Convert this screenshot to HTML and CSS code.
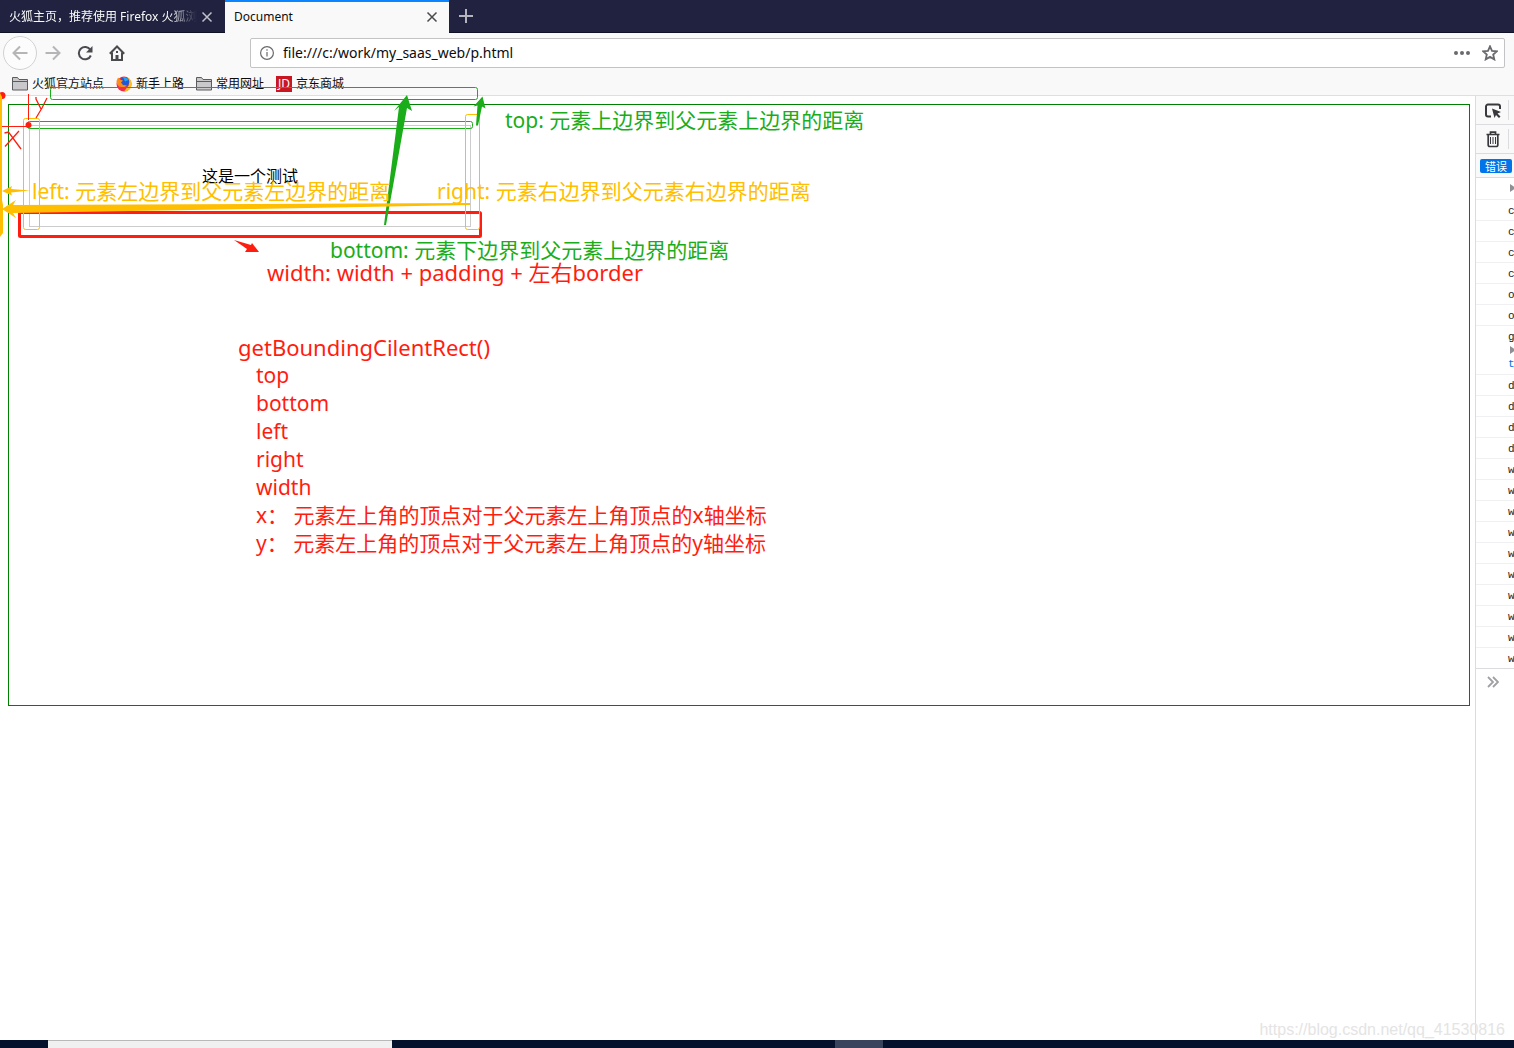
FILE: index.html
```
<!DOCTYPE html>
<html lang="zh-CN">
<head>
<meta charset="utf-8">
<title>Document</title>
<link rel="stylesheet" href="styles.css">
</head>
<body>
<header class="browser">
  <div class="tabs">
    <div class="tab">
      <span class="tab-title tab-title-fade">火狐主页，推荐使用 Firefox 火狐浏览器</span>
      <button class="icon-btn" aria-label="关闭标签页"><svg width="12" height="12" viewBox="0 0 12 12"><path d="M1.500 1.500l9 9M10.500 1.500l-9 9"/></svg></button>
    </div>
    <div class="tab tab-active">
      <span class="tab-title">Document</span>
      <button class="icon-btn" aria-label="关闭标签页"><svg width="12" height="12" viewBox="0 0 12 12"><path d="M1.500 1.500l9 9M10.500 1.500l-9 9"/></svg></button>
    </div>
    <button class="icon-btn new-tab" aria-label="新标签页"><svg width="14" height="14" viewBox="0 0 14 14"><path d="M7 0v14M0 7h14"/></svg></button>
  </div>
  <div class="nav">
    <button class="icon-btn nav-btn back" aria-label="后退"><svg width="16" height="16" viewBox="0 0 16 16"><path d="M15.500 8H1.500M8 1.500L1.500 8 8 14.500"/></svg></button>
    <button class="icon-btn nav-btn faded" aria-label="前进"><svg width="16" height="16" viewBox="0 0 16 16"><path d="M.5 8h14M8 1.500L14.500 8 8 14.500"/></svg></button>
    <button class="icon-btn nav-btn" aria-label="刷新"><svg width="16" height="16" viewBox="0 0 16 16"><path d="M13.300 4.800A6.200 6.200 0 1 0 13.800 10.500"/><path class="solid" d="M15.500 1v6.500H9z"/></svg></button>
    <button class="icon-btn nav-btn" aria-label="主页"><svg width="16" height="16" viewBox="0 0 16 16"><path d="M.8 8.700L8 1.500l7.200 7.200M3 7.500V15h10V7.500"/><path class="solid" d="M6.500 15v-5h3v5z"/><path d="M8 6v2"/></svg></button>
    <div class="urlbar">
      <svg class="info" width="14" height="14" viewBox="0 0 14 14"><circle cx="7" cy="7" r="6.400"/><path d="M7 6v4.500M7 3.300v1.500"/></svg>
      <input class="url" type="text" aria-label="地址" value="file:///c:/work/my_saas_web/p.html">
      <button class="icon-btn" aria-label="页面操作"><svg width="16" height="16" viewBox="0 0 16 16"><circle class="solid" cx="2" cy="8" r="2"/><circle class="solid" cx="8" cy="8" r="2"/><circle class="solid" cx="14" cy="8" r="2"/></svg></button>
      <button class="icon-btn" aria-label="加入书签"><svg width="16" height="16" viewBox="0 0 16 16"><path d="M8 1.300l2 4.500 4.900.5-3.700 3.200 1.100 4.900L8 11.900l-4.300 2.500 1.100-4.900L1.100 6.300 6 5.800z"/></svg></button>
    </div>
  </div>
  <nav class="bookmarks">
    <a class="bookmark" href="#"><svg class="folder" width="16" height="14" viewBox="0 0 16 14"><path d="M.5 13V.5h5l1.500 2h8.500V13zM.5 4.500h15"/></svg>火狐官方站点</a>
    <a class="bookmark" href="#"><svg width="16" height="16" viewBox="0 0 16 16"><circle cx="8" cy="8" r="7.500" fill="#f22d4b"/><path d="M8 15.500A7.500 7.500 0 0 0 14.500 4L12 1.500 9.500 4 13 9z" fill="#ffbd1f"/><circle cx="8.500" cy="6" r="4.800" fill="#2457d6"/><path d="M7 1a6 6 0 0 1 5.500 3L9 5.500z" fill="#20a5f5"/><path d="M.5 5L2 1.500l2 2 3 1-2 2 2 2.500 4 .5-3 2-5-1L1 8z" fill="#ff8a16"/></svg>新手上路</a>
    <a class="bookmark" href="#"><svg class="folder" width="16" height="14" viewBox="0 0 16 14"><path d="M.5 13V.5h5l1.500 2h8.500V13zM.5 4.500h15"/></svg>常用网址</a>
    <a class="bookmark" href="#"><span class="jd">JD</span>京东商城</a>
  </nav>
</header>

<div class="content">
  <main class="page">
    <section class="parent"><div class="child">这是一个测试</div></section>
  </main>
  <aside class="devtools">
    <div class="tool"><button class="icon-btn" aria-label="选取元素"><svg width="17" height="17" viewBox="0 0 17 17"><path d="M6 14.500H3A2 2 0 0 1 1 12.500V4.500a2 2 0 0 1 2-2h10a2 2 0 0 1 2 2V7"/><path class="solid" d="M7 6.500l9 3.500-3.500 1.500 3 3-1.500 1.500-3-3L9.500 16z"/></svg></button></div>
    <div class="tool"><button class="icon-btn" aria-label="清空"><svg width="14" height="17" viewBox="0 0 14 17"><path class="bin" d="M.5 3.500h13M4.500 3V1.200h5V3M2.200 4v10a1.500 1.500 0 0 0 1.500 1.500h6.600a1.500 1.500 0 0 0 1.500-1.500V4"/><path class="thin" d="M4.500 6v7M7 6v7M9.500 6v7"/></svg></button></div>
    <div class="filter"><button class="filter-btn">错误</button></div>
    <ul class="log">
      <li><i class="twisty"></i></li>
      <li>c</li><li>c</li><li>c</li><li>c</li><li>o</li><li>o</li>
      <li class="group">g<i class="twisty"></i><span class="token">t</span></li>
      <li>d</li><li>d</li><li>d</li><li>d</li>
      <li>w</li><li>w</li><li>w</li><li>w</li><li>w</li><li>w</li><li>w</li><li>w</li><li>w</li><li>w</li>
    </ul>
    <div class="prompt"><svg width="12" height="12" viewBox="0 0 12 12"><path d="M1 1l5 5-5 5M6 1l5 5-5 5"/></svg></div>
  </aside>
</div>

<footer class="taskbar"><span class="task-search"></span><span class="task-active"></span></footer>

<svg class="ink" width="520" height="270" viewBox="0 0 520 270">
  <g class="ink-green-line"><rect x="50.500" y="87.500" width="427" height="12" rx="2"/><rect x="27.500" y="121.500" width="445" height="7" rx="2"/></g>
  <rect class="ink-red-box" x="19.500" y="212.500" width="461" height="24" rx="1"/>
  <g class="ink-yellow-line"><rect x="23.500" y="118.500" width="16" height="111" rx="2"/><rect x="465.500" y="114.500" width="14" height="115" rx="2"/></g>
  <path class="green-fill" d="M407 95l5 16-5-3-21 117h-2l15-118-5 4zM482.500 96.500l3 12-3.500-2-4 19h-2l1.500-20-4 1z"/>
  <path class="red-line" d="M2 126.500h26M28.500 94v26"/>
  <path class="red-line pen" d="M36 97v2l5 10M47 98l-5 10-6 10M4.500 133l4-1L21 149M19 131L5 146.500"/>
  <circle class="red-fill" cx="28.500" cy="125" r="3"/><circle class="red-fill" cx="2" cy="95.500" r="3.500"/>
  <path class="red-fill" d="M234 240l17 5 1-2 7 9-14 0 2-3z"/>
  <path class="yellow-fill" d="M0 93l2 4v103l1 5v28l-3 4zM2 191l10-5-1 3 19 1.500-19 2 1 3zM2 209l14-9-3 5 457-2v2l-220 4-237 4 3 5z"/>
</svg>
<p class="note green note-top">top: 元素上边界到父元素上边界的距离</p>
<p class="note yellow note-left">left: 元素左边界到父元素左边界的距离</p>
<p class="note yellow note-right">right: 元素右边界到父元素右边界的距离</p>
<p class="note green note-bottom">bottom: 元素下边界到父元素上边界的距离</p>
<p class="note red note-width">width: width + padding + 左右border</p>
<div class="note red note-api">
  <div class="api-name">getBoundingCilentRect()</div>
  <ul class="api-list"><li>top</li><li>bottom</li><li>left</li><li>right</li><li>width</li><li>x： 元素左上角的顶点对于父元素左上角顶点的x轴坐标</li><li>y： 元素左上角的顶点对于父元素左上角顶点的y轴坐标</li></ul>
</div>
<p class="watermark">https://blog.csdn.net/qq_41530816</p>
</body>
</html>
```
FILE: styles.css
```
* { box-sizing: border-box; }
body {
  margin: 0;
  min-height: 100vh;
  display: flex;
  flex-direction: column;
  position: relative;
  overflow-x: hidden;
  background: #fff;
  color: #000;
  font: 12px/16px "Noto Sans", "Noto Sans CJK SC", sans-serif;
}
ul, p { margin: 0; padding: 0; list-style: none; }
svg { display: block; flex: none; fill: none; stroke: currentColor; stroke-width: 2; }
.solid { fill: currentColor; stroke: none; }
.icon-btn {
  display: flex; align-items: center; justify-content: center;
  padding: 0; border: 0; background: none; color: inherit;
}

.browser { background: #f9f9fa; border-bottom: 1px solid #dfdfe1; }
.tabs { display: flex; height: 33px; background: #20223f; border-bottom: 1px solid #0f1126; color: #f9f9fa; }
.tab { display: flex; align-items: center; justify-content: space-between; width: 225px; height: 33px; padding: 0 12px 0 9px; }
.tab svg { stroke-width: 1.500; color: #c0c0c8; }
.tab-active { width: 224px; background: #f9f9fa; border-top: 2px solid #0a84ff; color: #0c0c0d; padding: 0 11px 2px 9px; }
.tab-active svg { color: #4a4a4f; }
.tab-title { white-space: nowrap; overflow: hidden; width: 188px; }
.tab-title-fade { mask-image: linear-gradient(to right, #000 160px, transparent 188px); }
.new-tab { width: 34px; color: #b4b4c0; }

.nav { display: flex; align-items: center; height: 40px; padding: 0 9px 0 3px; color: #4a4a4f; }
.nav-btn { width: 32px; height: 32px; }
.nav-btn svg { stroke-width: 2; }
.back { width: 34px; height: 34px; border: 1px solid #d2d2d4; border-radius: 50%; background: #fcfcfc; color: #b5b5b8; }
.faded { color: #b5b5b8; }
.urlbar {
  flex: 1; display: flex; align-items: center; gap: 12px;
  height: 30px; margin-left: 117px; padding: 0 6px 0 9px;
  background: #fff; border: 1px solid #c3c3c5; border-radius: 2px; color: #6a6a6e;
}
.url {
  flex: 1; min-width: 0; padding: 0; margin-left: -3px; border: 0; outline: 0; background: none; color: #0c0c0d;
  font: 14px/20px "Noto Sans", sans-serif;
}
.urlbar svg { stroke-width: 1.800; }
.urlbar .info { stroke-width: 1.200; }
.bookmarks { display: flex; align-items: center; gap: 12px; height: 22px; padding-left: 12px; }
.bookmark { display: flex; align-items: center; gap: 4px; color: #0c0c0d; text-decoration: none; white-space: nowrap; }
.bookmark svg { stroke: none; }
.bookmark .folder { fill: #c9c9cb; stroke: #5c5c60; stroke-width: 1; }
.jd { width: 16px; height: 16px; background: #c81623; color: #fff; font-size: 12px; line-height: 15px; text-align: center; }

.content { flex: 1; display: flex; }
.page { flex: 1; min-width: 0; padding: 8px 5px 8px 8px; }
.parent { height: 602px; padding: 20px; border: 1px solid #008000; }
.child {
  display: flex; align-items: center; justify-content: center;
  width: 442px; height: 102px; border: 1px solid #ccc; font-size: 16px;
}
.devtools { width: 39px; border-left: 1px solid #dcdce0; overflow: hidden; }
.tool { height: 29px; padding: 4px; background: #f9f9fa; border-bottom: 1px solid #dcdce0; color: #38383d; }
.tool .icon-btn { width: 29px; height: 20px; padding-right: 4px; padding-left: 2px; border-right: 1px solid #dcdce0; }
.tool .bin { stroke-width: 1.700; }
.tool .thin { stroke-width: 1; }
.filter { height: 24px; padding: 5px 0 0 4px; background: #f9f9fa; border-bottom: 1px solid #dcdce0; }
.filter-btn { width: 32px; height: 14px; padding: 0; border: 0; border-radius: 2px; background: #0074e8; color: #fff; font: 11px/14px "Noto Sans CJK SC", sans-serif; }
.log { color: #222; font: 11px/14px "Liberation Mono", monospace; border-bottom: 1px solid #dcdce0; }
.log li { height: 21px; padding: 4px 0 0 32px; border-bottom: 1px solid #f0f0f2; }
.log li:first-child { height: 22px; }
.log li:last-child { height: 20px; border: 0; }
.log .group { height: 49px; }
.twisty { display: block; width: 0; height: 8px; margin: 2px 0 0 2px; border: 4px solid transparent; border-left: 6px solid #909094; border-right: 0; }
.token { display: block; margin-top: 3px; color: #0074e8; }
.prompt { padding: 7px 0 0 11px; color: #a0a0a4; }
.prompt svg { stroke-width: 1.800; }
.taskbar { display: flex; height: 8px; background: #04102c; }
.task-search { width: 344px; margin-left: 48px; background: #f0f0f0; border-top: 1px solid #b8b8b8; }
.task-active { width: 48px; margin-left: 443px; background: #39435c; }

/* Hand-drawn annotation layer over the page */
.ink { position: absolute; left: 0; top: 0; stroke: none; pointer-events: none; }
.ink-green-line { stroke: #1aad19; stroke-width: 1; }
.ink-yellow-line { stroke: #ffbe00; stroke-width: 1; }
.ink-red-box { stroke: #ff1d10; stroke-width: 3; }
.red-line { stroke: #ff1d10; stroke-width: 1; }
.pen { stroke-width: 1.300; }
.green-fill { fill: #1aad19; }
.red-fill { fill: #ff1d10; }
.yellow-fill { fill: #ffbe00; }
.note { position: absolute; font-size: 21px; line-height: 28px; white-space: nowrap; }
.green { color: #1aad19; }
.yellow { color: #ffbe00; }
.red { color: #ff1d10; }
.note-top { left: 505px; top: 106px; }
.note-left { left: 32px; top: 177px; }
.note-right { left: 437px; top: 177px; }
.note-bottom { left: 330px; top: 236px; }
.note-width { left: 267px; top: 258px; font-size: 22px; }
.note-api { left: 238px; top: 333px; }
.api-name { font-size: 22px; }
.api-list { padding-left: 18px; }
.watermark { position: absolute; right: 9px; bottom: 8px; color: #e4e4e4; font: 16px/20px "Liberation Sans", sans-serif; }
```
